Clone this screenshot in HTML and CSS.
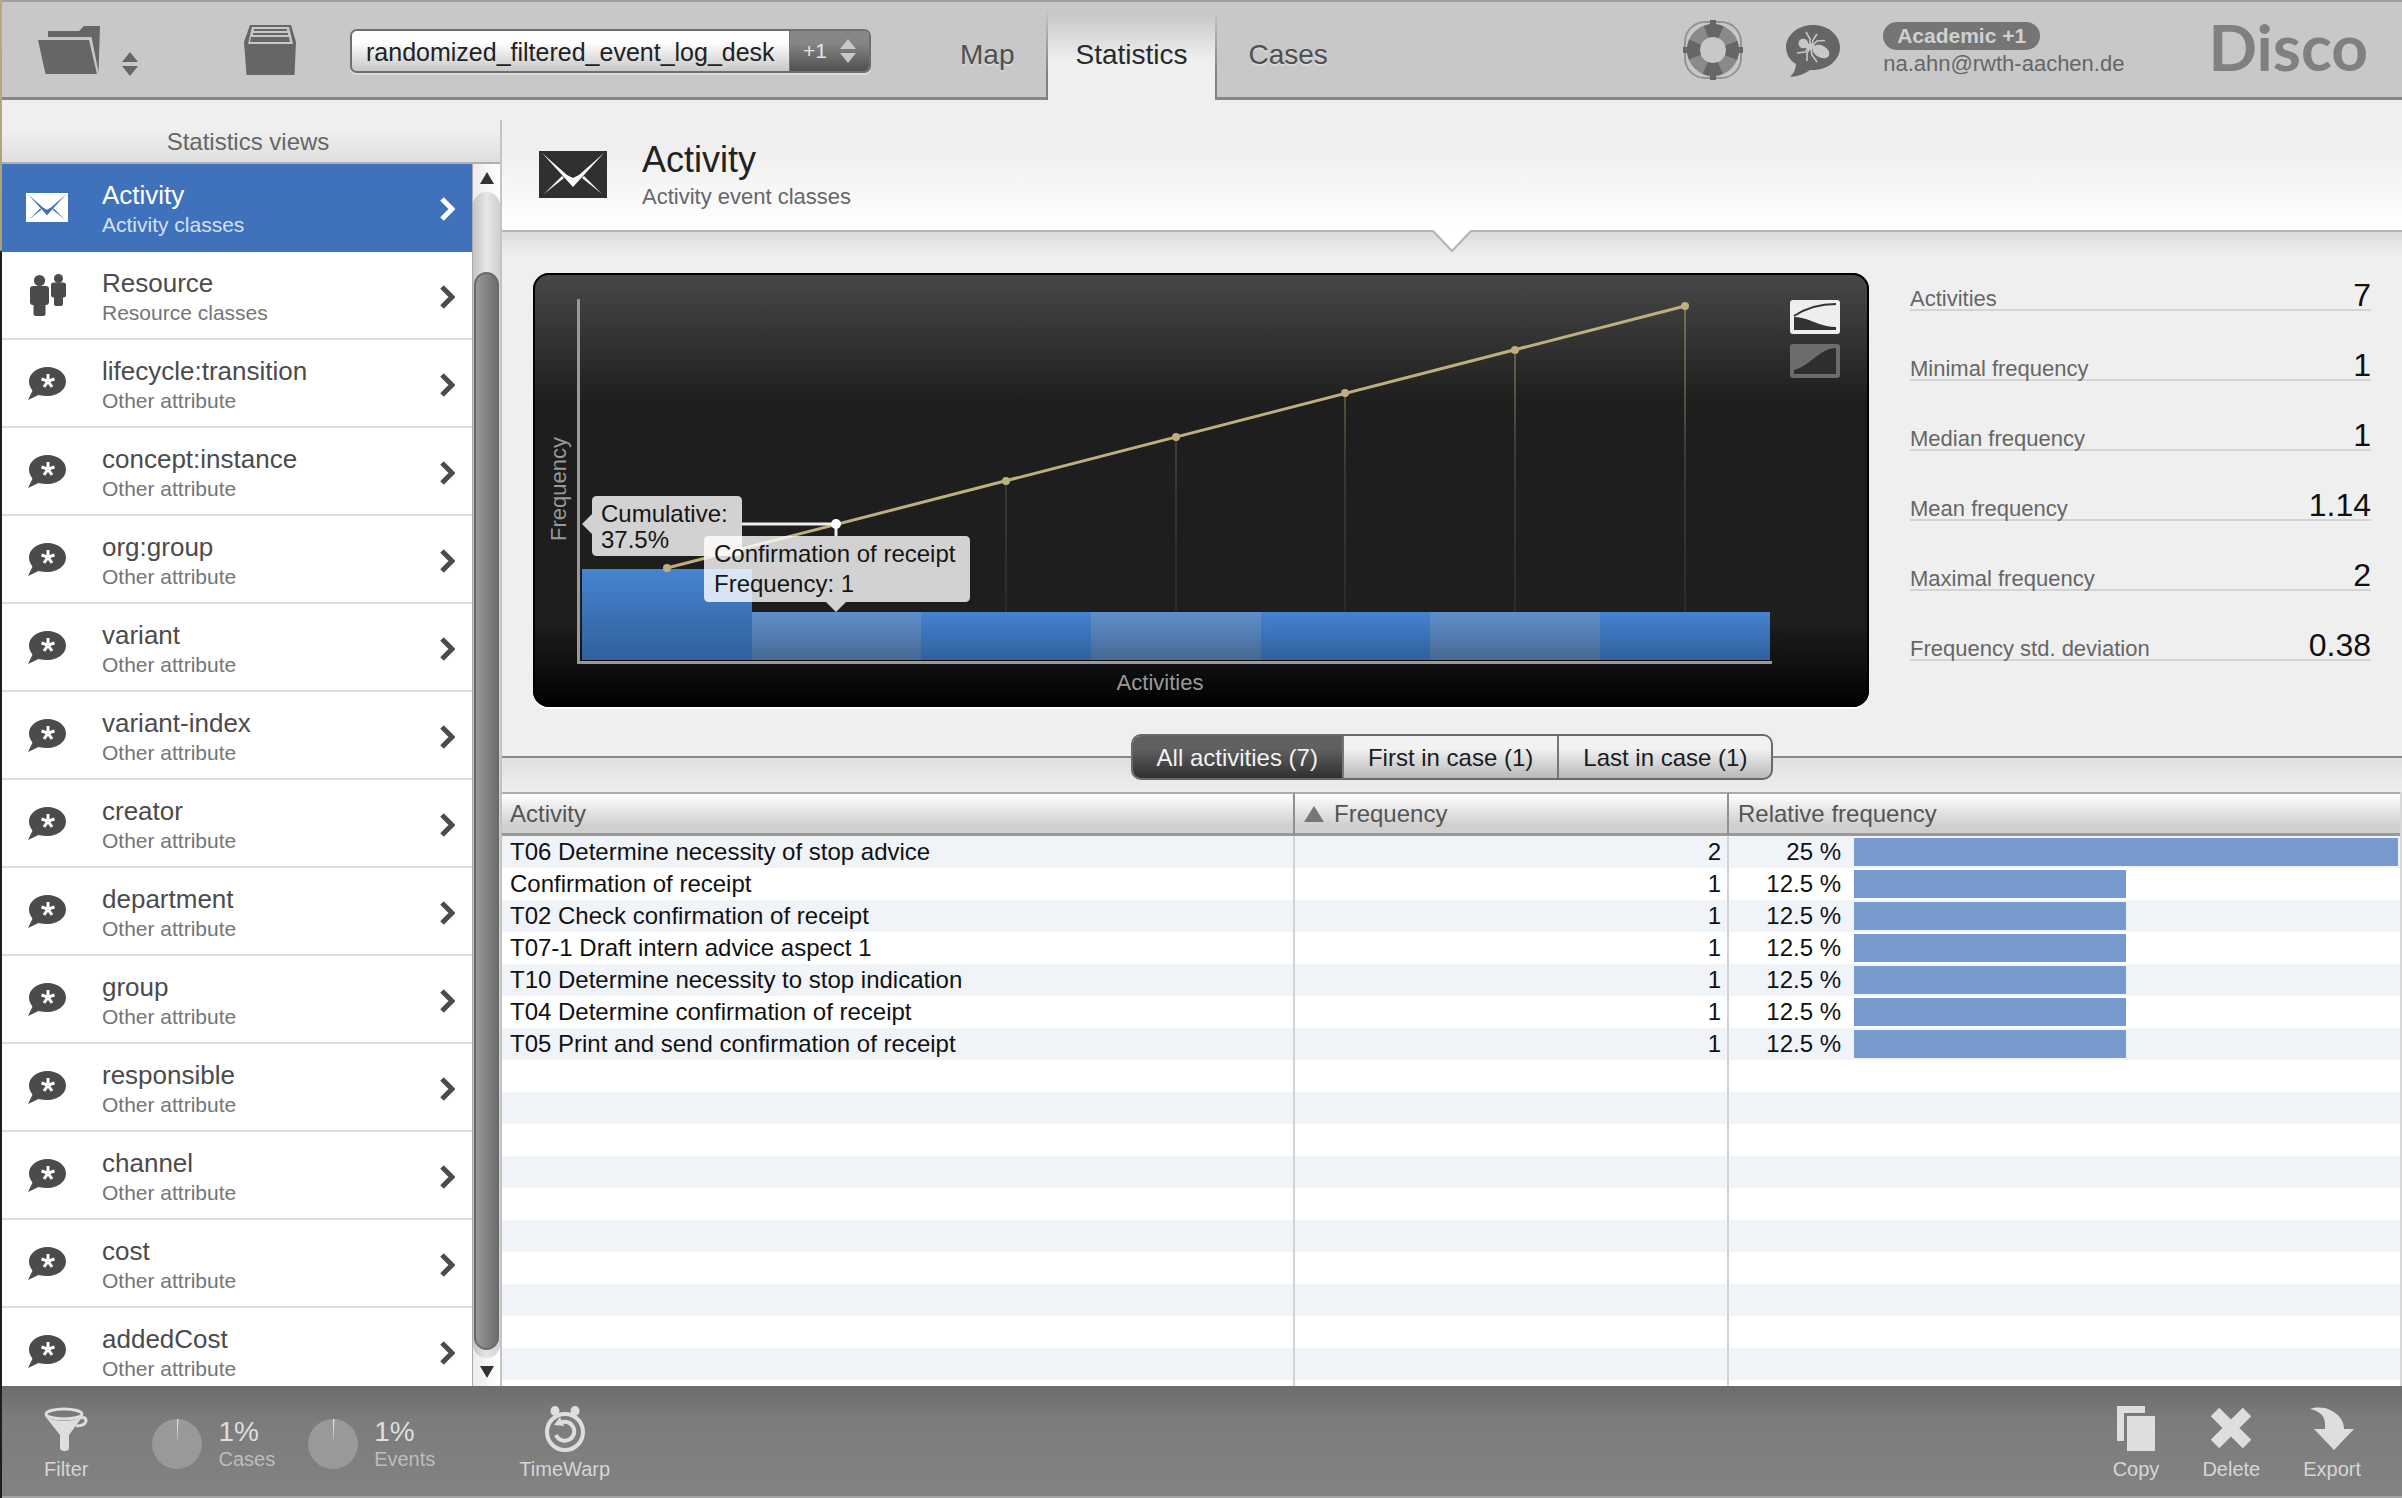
FILE: index.html
```html
<!DOCTYPE html>
<html lang="en">
<head>
<meta charset="utf-8">
<title>Disco - Statistics</title>
<link rel="stylesheet" href="styles.css">
</head>
<body>
<svg class="sprite" aria-hidden="true">
  <symbol id="i-attr" viewBox="0 0 38 33"><path fill="currentColor" d="M19.500 0C30 0 38 6.500 38 14.500S30 29 19.500 29Q14 29 10.500 28L0 33L4.500 23.500Q1 19.500 1 14.500C1 6.500 9 0 19.500 0Z"/><path stroke="#fff" stroke-width="3" fill="none" d="M20 7v7M13.500 12l6.500 2.200M26.500 12l-6.500 2.200M16 20l4-5.800M24 20l-4-5.800"/></symbol>
  <symbol id="i-people" viewBox="0 0 38 42"><g fill="currentColor"><circle cx="11.500" cy="6.500" r="5.600"/><rect x="2" y="12" width="19" height="19" rx="3"/><rect x="5.500" y="26" width="12" height="16" rx="2.500"/><circle cx="30.500" cy="4.500" r="4.500"/><rect x="23" y="8.500" width="15" height="15" rx="2.500"/><rect x="26" y="18" width="9" height="14" rx="2"/></g></symbol>
  <symbol id="i-mail" viewBox="0 0 68 47"><path fill="currentColor" d="M0 0H68V47H0Z"/><path class="fold" d="M3 2L28 24L34 27L40 24L65 2L34 36ZM5 43L23 25L25 27ZM63 43L45 25L43 27Z"/></symbol>
  <symbol id="i-chev" viewBox="0 0 15 24"><path fill="none" stroke="currentColor" stroke-width="5" d="M2 2L12 12L2 22"/></symbol>
</svg>
<div class="app">
  <header class="toolbar">
    <button class="icon-btn folder" aria-label="Open log"><svg width="62" height="48" viewBox="0 0 62 48"><path fill="#666" d="M10 5H41L46 0H62L60.500 46L53.500 11H10ZM0 14H51L59 48H7.500Z"/></svg></button>
    <button class="icon-btn sorter" aria-label="Recent logs"><svg width="16" height="24" viewBox="0 0 16 24"><path fill="#666" d="M8 0L16 10H0ZM8 24L0 14H16Z"/></svg></button>
    <button class="icon-btn archive" aria-label="Project"><svg width="52" height="50" viewBox="0 0 52 50"><path fill="#666" d="M6 0H47L52 17L50.500 50H2.500L0 17Z"/><path fill="#c8c8c8" d="M8 2H45L49 19H4Z"/><path fill="#666" d="M10 4H43V6H10ZM9 8H44V10H9ZM7 12H45L46 17H6Z"/></svg></button>
    <div class="logpick">
      <select aria-label="Event log"><option>randomized_filtered_event_log_desk</option></select>
      <button class="more">+1<svg width="16" height="24" viewBox="0 0 16 24"><path fill="#c8c8c8" d="M8 0L16 10H0ZM8 24L0 14H16Z"/></svg></button>
    </div>
    <nav class="tabs">
      <a href="#map">Map</a>
      <a href="#statistics" class="active" aria-current="page">Statistics</a>
      <a href="#cases">Cases</a>
    </nav>
    <button class="icon-btn help" aria-label="Help"><svg width="60" height="60" viewBox="0 0 60 60"><rect x="2" y="2" width="56" height="56" rx="20" fill="none" stroke="#939393" stroke-width="2"/><circle cx="30" cy="30" r="19.500" fill="none" stroke="#8a8a8a" stroke-width="13"/><circle cx="30" cy="30" r="19.500" fill="none" stroke="#666" stroke-width="13" stroke-dasharray="15.300 15.330" stroke-dashoffset="7.650"/><path fill="#666" d="M27 0h6v6h-6zM27 54h6v6h-6zM0 27h6v6H0zM54 27h6v6h-6z"/></svg></button>
    <button class="icon-btn bug" aria-label="Feedback"><svg width="54" height="52" viewBox="0 0 54 52"><path fill="#666" d="M27 0C42 0 54 10 54 22.500S42 45 27 45H24Q16 51 4 52Q10 46 10 39Q0 33 0 22.500C0 10 12 0 27 0Z"/><g fill="#c8c8c8"><circle cx="17.300" cy="18.500" r="4.800"/><ellipse cx="24" cy="21.500" rx="4.500" ry="3"/><ellipse cx="35" cy="26.500" rx="9" ry="6" transform="rotate(28 35 26.500)"/></g><path fill="none" stroke="#c8c8c8" stroke-width="1.600" d="M24 20L24 14L20 7M26 20L27 15L31 9M27 20L31 16L39 15.500M23 22L19 27L11 28M24 23L21 28L21 36M25 24L26 30L31 37"/></svg></button>
    <div class="account">
      <span class="badge">Academic +1</span>
      <span class="mail">na.ahn@rwth-aachen.de</span>
    </div>
    <div class="brand">Disco</div>
  </header>

  <div class="body">
    <aside class="sidebar">
      <h2>Statistics views</h2>
      <div class="views">
        <nav class="list">
          <a href="#" class="on"><svg class="ico ico-mail" width="42" height="29"><use href="#i-mail"/></svg><span class="txt"><b>Activity</b><small>Activity classes</small></span><svg class="chev" width="15" height="24"><use href="#i-chev"/></svg></a>
          <a href="#"><svg class="ico" width="38" height="42"><use href="#i-people"/></svg><span class="txt"><b>Resource</b><small>Resource classes</small></span><svg class="chev" width="15" height="24"><use href="#i-chev"/></svg></a>
          <a href="#"><svg class="ico" width="38" height="33"><use href="#i-attr"/></svg><span class="txt"><b>lifecycle:transition</b><small>Other attribute</small></span><svg class="chev" width="15" height="24"><use href="#i-chev"/></svg></a>
          <a href="#"><svg class="ico" width="38" height="33"><use href="#i-attr"/></svg><span class="txt"><b>concept:instance</b><small>Other attribute</small></span><svg class="chev" width="15" height="24"><use href="#i-chev"/></svg></a>
          <a href="#"><svg class="ico" width="38" height="33"><use href="#i-attr"/></svg><span class="txt"><b>org:group</b><small>Other attribute</small></span><svg class="chev" width="15" height="24"><use href="#i-chev"/></svg></a>
          <a href="#"><svg class="ico" width="38" height="33"><use href="#i-attr"/></svg><span class="txt"><b>variant</b><small>Other attribute</small></span><svg class="chev" width="15" height="24"><use href="#i-chev"/></svg></a>
          <a href="#"><svg class="ico" width="38" height="33"><use href="#i-attr"/></svg><span class="txt"><b>variant-index</b><small>Other attribute</small></span><svg class="chev" width="15" height="24"><use href="#i-chev"/></svg></a>
          <a href="#"><svg class="ico" width="38" height="33"><use href="#i-attr"/></svg><span class="txt"><b>creator</b><small>Other attribute</small></span><svg class="chev" width="15" height="24"><use href="#i-chev"/></svg></a>
          <a href="#"><svg class="ico" width="38" height="33"><use href="#i-attr"/></svg><span class="txt"><b>department</b><small>Other attribute</small></span><svg class="chev" width="15" height="24"><use href="#i-chev"/></svg></a>
          <a href="#"><svg class="ico" width="38" height="33"><use href="#i-attr"/></svg><span class="txt"><b>group</b><small>Other attribute</small></span><svg class="chev" width="15" height="24"><use href="#i-chev"/></svg></a>
          <a href="#"><svg class="ico" width="38" height="33"><use href="#i-attr"/></svg><span class="txt"><b>responsible</b><small>Other attribute</small></span><svg class="chev" width="15" height="24"><use href="#i-chev"/></svg></a>
          <a href="#"><svg class="ico" width="38" height="33"><use href="#i-attr"/></svg><span class="txt"><b>channel</b><small>Other attribute</small></span><svg class="chev" width="15" height="24"><use href="#i-chev"/></svg></a>
          <a href="#"><svg class="ico" width="38" height="33"><use href="#i-attr"/></svg><span class="txt"><b>cost</b><small>Other attribute</small></span><svg class="chev" width="15" height="24"><use href="#i-chev"/></svg></a>
          <a href="#"><svg class="ico" width="38" height="33"><use href="#i-attr"/></svg><span class="txt"><b>addedCost</b><small>Other attribute</small></span><svg class="chev" width="15" height="24"><use href="#i-chev"/></svg></a>
        </nav>
        <div class="scroll" aria-hidden="true">
          <svg width="28" height="28" viewBox="0 0 28 28"><path fill="#333" d="M14 8L21 20H7Z"/></svg>
          <div class="track"><div class="thumb"></div></div>
          <svg width="28" height="28" viewBox="0 0 28 28"><path fill="#333" d="M14 20L7 8H21Z"/></svg>
        </div>
      </div>
    </aside>

    <main class="main">
      <div class="title">
        <svg class="title-ico" width="68" height="47"><use href="#i-mail"/></svg>
        <div><h1>Activity</h1><p>Activity event classes</p></div>
        <svg class="notch" width="40" height="23" viewBox="0 0 40 23"><path fill="#fff" d="M1 0H39L20 21Z"/><path fill="none" stroke="#b4b4b4" stroke-width="2" d="M1 1L20 21L39 1"/></svg>
      </div>

      <section class="overview">
        <div class="chart">
          <svg viewBox="0 0 1336 434" role="img" aria-label="Frequency of activities">
            <defs>
              <linearGradient id="dark" x1="0" y1="0" x2="0" y2="1"><stop offset="0" stop-color="#4684d0"/><stop offset="1" stop-color="#30609c"/></linearGradient>
              <linearGradient id="light" x1="0" y1="0" x2="0" y2="1"><stop offset="0" stop-color="#5f90cd"/><stop offset="1" stop-color="#476794"/></linearGradient>
              <linearGradient id="drop" gradientUnits="userSpaceOnUse" x1="0" y1="33" x2="0" y2="338"><stop offset="0" stop-color="#7a7054"/><stop offset="0.500" stop-color="#3d3a2f"/><stop offset="1" stop-color="#2c2a23"/></linearGradient>
            </defs>
            <path fill="none" stroke="url(#drop)" stroke-width="2" d="M473 208V339M643 164V339M812 120V339M982 77V339M1152 33V339"/>
            <g fill="url(#dark)"><path d="M49 296H219V387H49Z"/><path d="M388 339H558V387H388Z"/><path d="M728 339H897V387H728Z"/><path d="M1067 339H1237V387H1067Z"/></g>
            <g fill="url(#light)"><path d="M219 339H388V387H219Z"/><path d="M558 339H728V387H558Z"/><path d="M897 339H1067V387H897Z"/></g>
            <path fill="#999" d="M44 26H47V388H1239V391H44Z"/>
            <path fill="none" stroke="#bfae7e" stroke-width="3" d="M134 295L1152 33"/>
            <g fill="#bfae7e"><circle cx="134" cy="295" r="4"/><circle cx="473" cy="208" r="4"/><circle cx="643" cy="164" r="4"/><circle cx="812" cy="120" r="4"/><circle cx="982" cy="77" r="4"/><circle cx="1152" cy="33" r="4"/></g>
            <path fill="none" stroke="#eee" stroke-width="3" d="M209 251H303V263"/><circle cx="303" cy="251" r="5" fill="#fff"/>
            <path class="tip" d="M64 223H204Q209 223 209 228V278Q209 283 204 283H64Q59 283 59 278V261L49 251L59 241V228Q59 223 64 223Z"/>
            <text class="tip-text" x="68" y="249">Cumulative:</text>
            <text class="tip-text" x="68" y="275">37.5%</text>
            <path class="tip" d="M176 263H432Q437 263 437 268V324Q437 329 432 329H313L303 339L293 329H176Q171 329 171 324V268Q171 263 176 263Z"/>
            <text class="tip-text" x="181" y="289">Confirmation of receipt</text>
            <text class="tip-text" x="181" y="319">Frequency: 1</text>
            <text class="axis" x="627" y="417" text-anchor="middle">Activities</text>
            <text class="axis" x="-268" y="33" transform="rotate(-90)">Frequency</text>
          </svg>
          <div class="modes">
            <button class="active" aria-label="Frequency with cumulative curve"><svg width="50" height="34" viewBox="0 0 50 34"><path fill="#333" d="M4 17Q12 17 24 22T46 27V30H4Z"/><path fill="none" stroke="#333" stroke-width="2" d="M4 16C16 8 30 4 46 4"/></svg></button>
            <button aria-label="Distribution"><svg width="50" height="34" viewBox="0 0 50 34"><path fill="#2e2e2e" d="M4 30V26C20 22 30 4 46 4V30Z"/></svg></button>
          </div>
        </div>
        <dl class="facts">
          <div><dt>Activities</dt><dd>7</dd></div>
          <div><dt>Minimal frequency</dt><dd>1</dd></div>
          <div><dt>Median frequency</dt><dd>1</dd></div>
          <div><dt>Mean frequency</dt><dd>1.14</dd></div>
          <div><dt>Maximal frequency</dt><dd>2</dd></div>
          <div><dt>Frequency std. deviation</dt><dd>0.38</dd></div>
        </dl>
      </section>

      <div class="switch">
        <div class="segments">
          <button class="active" aria-pressed="true">All activities (7)</button>
          <button>First in case (1)</button>
          <button>Last in case (1)</button>
        </div>
      </div>

      <div class="grid">
        <table>
          <colgroup><col><col class="c-freq"><col class="c-rel"></colgroup>
          <thead><tr><th scope="col">Activity</th><th scope="col" aria-sort="ascending"><svg width="20" height="16" viewBox="0 0 20 16"><path fill="#777" d="M10 0L20 16H0Z"/></svg>Frequency</th><th scope="col">Relative frequency</th></tr></thead>
          <tbody>
            <tr><td>T06 Determine necessity of stop advice</td><td class="num">2</td><td><div class="rel"><span>25 %</span><i style="width:100%"></i></div></td></tr>
            <tr><td>Confirmation of receipt</td><td class="num">1</td><td><div class="rel"><span>12.5 %</span><i style="width:50%"></i></div></td></tr>
            <tr><td>T02 Check confirmation of receipt</td><td class="num">1</td><td><div class="rel"><span>12.5 %</span><i style="width:50%"></i></div></td></tr>
            <tr><td>T07-1 Draft intern advice aspect 1</td><td class="num">1</td><td><div class="rel"><span>12.5 %</span><i style="width:50%"></i></div></td></tr>
            <tr><td>T10 Determine necessity to stop indication</td><td class="num">1</td><td><div class="rel"><span>12.5 %</span><i style="width:50%"></i></div></td></tr>
            <tr><td>T04 Determine confirmation of receipt</td><td class="num">1</td><td><div class="rel"><span>12.5 %</span><i style="width:50%"></i></div></td></tr>
            <tr><td>T05 Print and send confirmation of receipt</td><td class="num">1</td><td><div class="rel"><span>12.5 %</span><i style="width:50%"></i></div></td></tr>
            <tr><td></td><td></td><td></td></tr>
            <tr><td></td><td></td><td></td></tr>
            <tr><td></td><td></td><td></td></tr>
            <tr><td></td><td></td><td></td></tr>
            <tr><td></td><td></td><td></td></tr>
            <tr><td></td><td></td><td></td></tr>
            <tr><td></td><td></td><td></td></tr>
            <tr><td></td><td></td><td></td></tr>
            <tr><td></td><td></td><td></td></tr>
            <tr><td></td><td></td><td></td></tr>
            <tr><td></td><td></td><td></td></tr>
          </tbody>
        </table>
      </div>
    </main>
  </div>

  <footer class="bottom">
    <button class="act filter"><svg width="44" height="46" viewBox="0 0 44 46"><ellipse cx="20" cy="8" rx="18" ry="5" fill="none" stroke="#dedede" stroke-width="3"/><path fill="#dedede" d="M1 10Q8 15 20 15T39 10L25 29V42Q25 45 20.500 45T16 42V29Z"/><path fill="none" stroke="#dedede" stroke-width="3" d="M35 12Q42 10 42 15Q41 20 32 20"/></svg>Filter</button>
    <div class="gauge"><svg width="50" height="50" viewBox="0 0 50 50"><circle cx="25" cy="25" r="25" fill="#999"/><path fill="#ddd" d="M25 25V0H26.500Z"/></svg><div><b>1%</b><small>Cases</small></div></div>
    <div class="gauge"><svg width="50" height="50" viewBox="0 0 50 50"><circle cx="25" cy="25" r="25" fill="#999"/><path fill="#ddd" d="M25 25V0H26.500Z"/></svg><div><b>1%</b><small>Events</small></div></div>
    <button class="act warp"><svg width="40" height="46" viewBox="0 0 40 46"><g fill="#dedede"><ellipse cx="10" cy="5" rx="4.500" ry="5"/><ellipse cx="30" cy="5" rx="4.500" ry="5"/><path d="M9 19L15 11L19 20Z"/></g><circle cx="20" cy="26" r="18" fill="none" stroke="#dedede" stroke-width="4"/><path fill="none" stroke="#dedede" stroke-width="4" d="M15 17A9.500 9.500 0 1 1 11 29"/></svg>TimeWarp</button>
    <button class="act copy"><svg width="38" height="46" viewBox="0 0 38 46"><path fill="#dedede" d="M0 0H28V7H7V35H0ZM10 10H38V45H10Z"/></svg>Copy</button>
    <button class="act"><svg width="40" height="46" viewBox="0 0 40 46"><path fill="none" stroke="#dedede" stroke-width="12" d="M4 6L36 38M36 6L4 38"/></svg>Delete</button>
    <button class="act"><svg width="44" height="46" viewBox="0 0 44 46"><path fill="#dedede" d="M0 3C6 1 14 1 20 4C29 8 34 15 34 23H44L24 44L4 23H15C16 14 14 6 0 3Z"/></svg>Export</button>
  </footer>
</div>
</body>
</html>
```

FILE: styles.css
```css
* { box-sizing: border-box; }
body, h1, h2, p, dl, dd { margin: 0; }
body, button, select {
  font-family: "Liberation Sans", Arial, sans-serif;
}
button { border: 0; background: none; padding: 0; }
svg { display: block; flex: none; }
a { text-decoration: none; color: inherit; }
.sprite { position: absolute; width: 0; height: 0; }

.app {
  display: flex;
  flex-direction: column;
  height: 100vh;
  padding-left: 2px;
  background: linear-gradient(#b9aa84 0, #a8a078 250px, #1e1e1e 252px);
}

/* Toolbar */
.toolbar {
  flex: none;
  display: flex;
  align-items: center;
  height: 100px;
  padding: 0 34px 0 36px;
  background: #c8c8c8;
  box-shadow: inset 0 2px #a0a0a0, inset 0 -3px #868686;
}
.sorter { margin: 28px 106px 0 22px; }
.archive { margin-right: 54px; }
.logpick {
  display: flex;
  width: 521px;
  height: 44px;
  margin: 2px 57px 0 0;
  border: 2px solid #6e6e6e;
  border-radius: 7px;
  overflow: hidden;
  box-shadow: 0 2px #dcdcdc;
}
.logpick select {
  appearance: none;
  flex: 1;
  min-width: 0;
  padding: 2px 0 0 14px;
  border: 0;
  border-right: 1px solid #777;
  background: linear-gradient(#fdfdfd 30%, #c8c8c8);
  color: #222;
  font-size: 25px;
}
.more {
  display: flex;
  align-items: center;
  gap: 13px;
  padding: 0 13px;
  background: linear-gradient(#868686 30%, #505050);
  color: #e4e4e4;
  font-size: 21px;
}
.tabs { display: flex; align-self: stretch; padding-top: 10px; }
.tabs a {
  padding: 0 32px;
  font-size: 28px;
  line-height: 90px;
  color: #505050;
  text-shadow: 0 2px #dadada;
}
.tabs a.active {
  padding: 0 27px;
  border: solid;
  border-width: 0 2px;
  border-image: linear-gradient(#c8c8c8, #808080 70%) 1;
  background: linear-gradient(#c8c8c8 5%, #efefef 55%);
  color: #2a2a2a;
  text-shadow: none;
}
.help { margin: 0 43px 0 auto; }
.bug { margin: 2px 43px 0 0; }
.account {
  display: flex;
  flex-direction: column;
  align-items: flex-start;
  margin-right: 84px;
  color: #666;
  font-size: 22px;
}
.badge {
  padding: 0 14px;
  border-radius: 14px;
  background: #757575;
  color: #d0d0d0;
  font-size: 21px;
  font-weight: bold;
  line-height: 28px;
}
.mail { line-height: 28px; }
.brand {
  padding-bottom: 6px;
  font-family: Lato, sans-serif;
  font-size: 64px;
  line-height: 92px;
  font-weight: bold;
  color: #808080;
}

/* Body */
.body { flex: 1; display: flex; min-height: 0; background: #efefef; }
.sidebar { flex: none; width: 498px; display: flex; flex-direction: column; }
.sidebar h2 {
  flex: none;
  height: 64px;
  padding: 20px 6px 0 0;
  border-bottom: 2px solid #b0b0b0;
  background: linear-gradient(#efefef 50%, #dedede);
  color: #666;
  font-size: 24px;
  font-weight: normal;
  line-height: 44px;
  text-align: center;
}
.views { flex: 1; display: flex; min-height: 0; }
.list { flex: 1; overflow: hidden; background: #fff; }
.list a {
  display: flex;
  align-items: center;
  height: 88px;
  padding: 0 17px 0 26px;
  border-bottom: 2px solid #dedede;
  color: #4b4b4b;
}
.list a.on { background: #4072bb; border-color: #4072bb; color: #fff; }
.ico { width: 38px; }
.ico-mail { width: 42px; margin: 0 -2px; fill: #4072bb; }
.title-ico { fill: #fff; }
.txt { flex: 1; padding: 4px 0 0 36px; }
.txt b { display: block; font-size: 26px; font-weight: normal; line-height: 32px; }
.txt small { display: block; font-size: 21px; line-height: 28px; color: #757575; }
.on small { color: #d5e0f0; }
.chev { margin-top: 3px; }
.scroll {
  flex: none;
  display: flex;
  flex-direction: column;
  width: 28px;
  border-left: 1px solid #aaa;
  background: linear-gradient(90deg, #ececec, #fff);
}
.track {
  flex: 1;
  padding: 80px 1px 8px;
  border-radius: 14px;
  background: linear-gradient(90deg, #c4c4c4, #e6e6e6 50%, #d0d0d0);
}
.thumb {
  height: 100%;
  border: 2px solid #6a6a6a;
  border-radius: 13px;
  background: linear-gradient(90deg, #989898, #6e6e6e);
}

.main {
  flex: 1;
  display: flex;
  flex-direction: column;
  min-width: 0;
  padding-left: 2px;
  background: linear-gradient(#efefef 20px, #c4c4c4 20px);
}
.title {
  position: relative;
  flex: none;
  display: flex;
  align-items: flex-start;
  gap: 35px;
  height: 132px;
  padding: 37px 0 0 37px;
  border-bottom: 2px solid #b4b4b4;
  background: linear-gradient(#efefef 40%, #fff 98%);
}
.title-ico { margin-top: 14px; color: #303030; }
.title h1 { font-size: 36px; font-weight: normal; line-height: 46px; color: #222; }
.title p { font-size: 22px; line-height: 28px; color: #666; }
.notch { position: absolute; left: 50%; bottom: -23px; margin-left: -20px; }

.overview {
  flex: none;
  display: grid;
  grid-template-columns: minmax(0, 1fr) 461px;
  gap: 41px;
  padding: 41px 31px 27px;
  background: linear-gradient(#dadada, #efefef 22px);
}
.chart {
  position: relative;
  border-radius: 16px;
  background: linear-gradient(#484848, #1e1e1e 30%, #1e1e1e 80%, #101010 90%, #000);
  box-shadow: inset 0 0 0 2px #000, 0 2px #fff;
}
.chart > svg { width: 100%; height: auto; }
.tip { fill: #fff; fill-opacity: 0.8; }
.tip-text { font-size: 24px; fill: #151515; }
.axis { font-size: 22px; fill: #999; }
.modes { position: absolute; top: 27px; right: 29px; display: grid; gap: 10px; }
.modes button { border-radius: 3px; background: #6c6c6c; }
.modes button.active { background: #eee; }
.facts { display: flex; flex-direction: column; }
.facts > div {
  display: flex;
  justify-content: space-between;
  align-items: baseline;
  height: 38px;
  margin-bottom: 32px;
  border-bottom: 2px solid #d4d4d4;
  line-height: 44px;
}
.facts dt { font-size: 22px; color: #666; }
.facts dd { font-size: 32px; color: #111; }

.switch {
  flex: none;
  display: flex;
  justify-content: center;
  padding-bottom: 12px;
  background: linear-gradient(#efefef 22px, #888 22px, #888 24px, #e0e0e0 24px, #eee);
}
.segments {
  display: flex;
  height: 46px;
  border: 2px solid #6a6a6a;
  border-radius: 10px;
  overflow: hidden;
  background: linear-gradient(#f2f2f2 30%, #b8b8b8);
}
.segments button { padding: 2px 24px 0; font-size: 24px; color: #1c1c1c; }
.segments button + button { border-left: 2px solid #777; }
.segments .active { background: linear-gradient(#606060 30%, #303030); color: #f2f2f2; }

.grid {
  flex: 1;
  min-height: 0;
  overflow: hidden;
  border-right: 2px solid #d8d8d8;
  background: #fff;
}
table { width: 100%; table-layout: fixed; border-spacing: 0; font-size: 24px; }
.c-freq { width: 434px; }
.c-rel { width: 671px; }
th {
  height: 44px;
  padding: 0 8px;
  border-top: 2px solid #aaa;
  border-bottom: 3px solid #999;
  background: linear-gradient(#fff, #cfcfcf 80%);
  color: #555;
  font-weight: normal;
  line-height: 38px;
  text-align: left;
}
th + th { padding-left: 9px; }
th:not(:last-child) { border-right: 2px solid #909090; }
th svg { display: inline-block; margin-right: 10px; }
td { height: 32px; padding: 0 6px 0 8px; line-height: 32px; color: #111; }
td:not(:last-child) { border-right: 2px solid #d4d4d4; }
td:last-child { padding: 0 2px 0 0; }
tbody tr:nth-child(odd) { background: #f0f3f8; }
.num { text-align: right; }
.rel { display: grid; grid-template-columns: 112px 1fr; column-gap: 13px; align-items: center; }
.rel span { text-align: right; }
.rel i { height: 28px; background: #7799cd; }

/* Bottom bar */
.bottom {
  flex: none;
  display: flex;
  align-items: flex-start;
  height: 112px;
  padding: 20px 41px 0 42px;
  border-bottom: 2px solid #a4a4a4;
  background: linear-gradient(#6c6c6c, #7c7c7c 30%, #828282);
}
.act {
  display: flex;
  flex-direction: column;
  align-items: center;
  gap: 5px;
  margin-right: 43px;
  color: #d6d6d6;
  font-size: 20px;
  line-height: 24px;
}
.filter { margin-right: 64px; }
.act:last-child { margin-right: 0; }
.copy { margin-left: auto; }
.gauge { display: flex; align-items: center; gap: 16px; margin: 11px 33px 0 0; }
.gauge b, .gauge small { display: block; }
.gauge b { font-size: 28px; font-weight: normal; line-height: 30px; color: #dedede; }
.gauge small { font-size: 20px; line-height: 24px; color: #bdbdbd; }
.warp { margin-left: 51px; }
```
